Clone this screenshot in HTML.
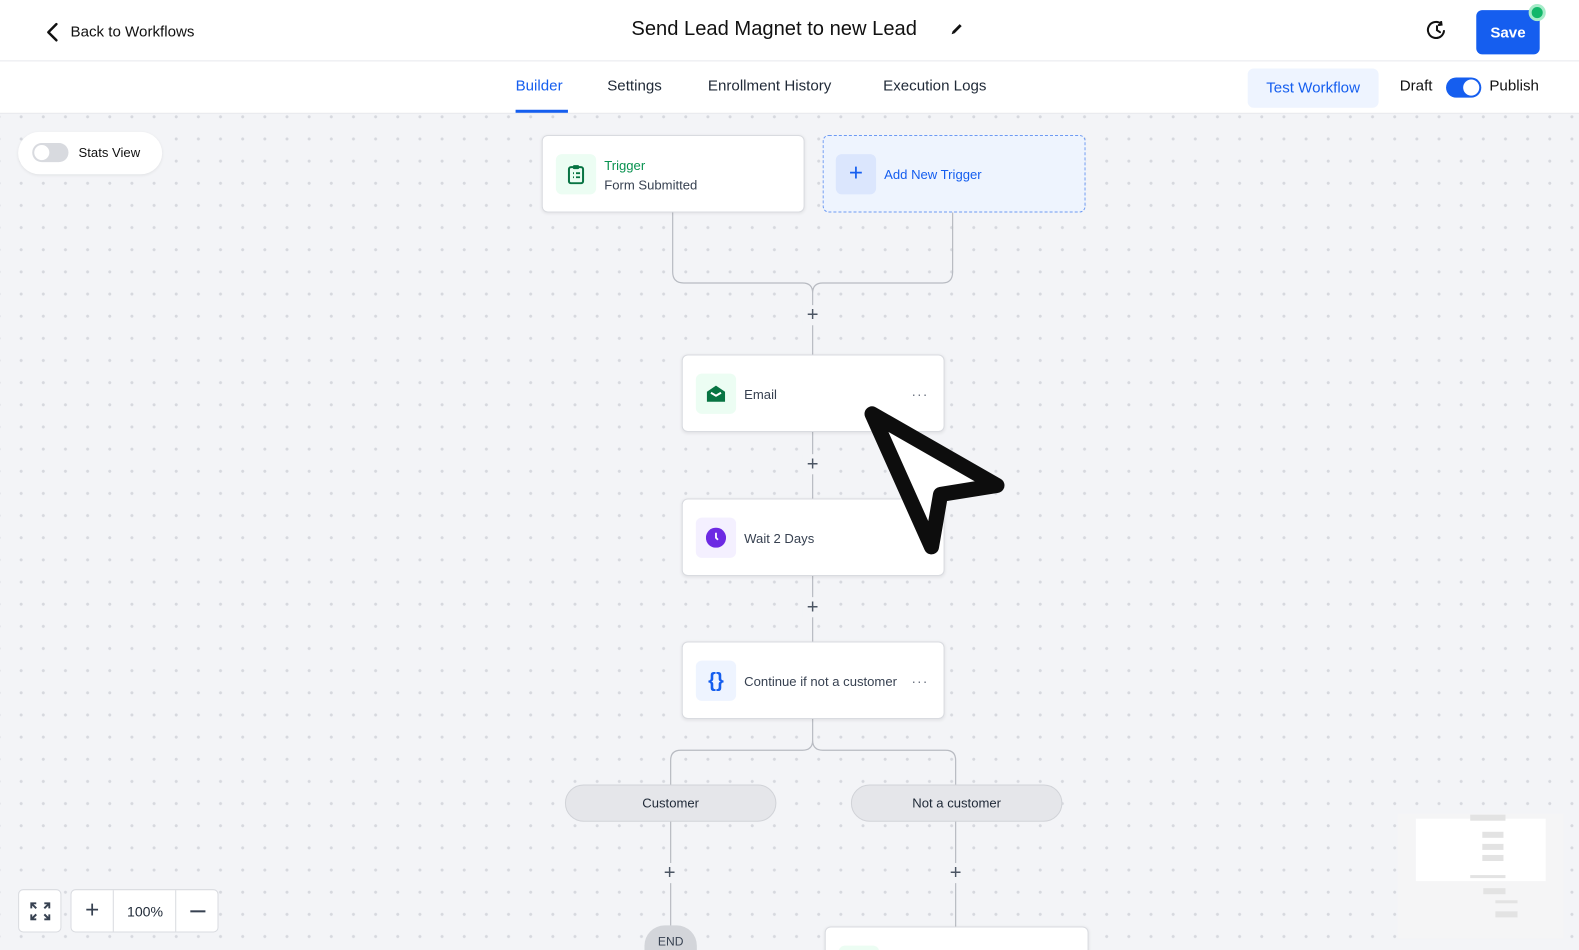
<!DOCTYPE html>
<html style="overflow:hidden;width:1579px;height:950px"><head><meta charset="utf-8"><style>
*{box-sizing:border-box;margin:0;padding:0}
html,body{overflow:hidden}
body{width:1579px;height:950px;font-family:"Liberation Sans",sans-serif;background:#f3f4f7;position:relative;color:#111827}
#w{position:absolute;left:0;top:0;width:1568px;height:944px;transform:scale(1.007);transform-origin:0 0}
.canvas{position:absolute;left:0;top:113px;width:1579px;height:837px;background-color:#f3f4f7;background-image:radial-gradient(circle,#d6d8de 1.3px,transparent 1.7px);background-size:22px 22px;background-position:10px -8px}
.hdr{position:absolute;left:0;top:0;width:1579px;height:61px;background:#fff;border-bottom:1px solid #e5e7eb}
.tabs{position:absolute;left:0;top:61px;width:1579px;height:52px;background:#fff;border-bottom:1px solid #e5e7eb}
.abs{position:absolute}
.card{position:absolute;background:#fff;border:1px solid #d9dbe0;border-radius:6px;box-shadow:0 1px 3px rgba(0,0,0,.08)}
.ic{position:absolute;left:13px;top:18px;width:40px;height:40px;border-radius:6px;display:flex;align-items:center;justify-content:center}
.lbl{position:absolute;left:61px;font-size:13px;color:#374151}
.dots{position:absolute;right:15px;top:30px;font-size:14px;color:#6b7280;letter-spacing:1px}
.plus{position:absolute;font-size:20px;color:#4b5563;width:20px;text-align:center;line-height:20px;background:#f3f4f7}
.pill{position:absolute;height:37px;background:#e5e6ea;border:1px solid #d1d3d8;border-radius:19px;font-size:13px;text-align:center;line-height:35px;color:#1f2937}
</style></head><body>
<div id="w">
<div class="canvas"></div>
<div class="hdr">
 <svg class="abs" style="left:44px;top:22px" width="16" height="20" viewBox="0 0 16 20"><path d="M12 2 L4 10 L12 18" stroke="#111" stroke-width="2.5" fill="none" stroke-linecap="round" stroke-linejoin="round"/></svg>
 <div class="abs" style="left:70px;top:23px;font-size:15px;color:#111">Back to Workflows</div>
 <div class="abs" style="left:627px;top:18px;font-size:20px;color:#111">Send Lead Magnet to new Lead</div>
 <svg class="abs" style="left:942px;top:21px" width="16" height="16" viewBox="0 0 16 16"><path d="M3 13 L4 10 L11 3 L13 5 L6 12 Z" fill="#111"/></svg>
 <svg class="abs" style="left:1416px;top:19px" width="22" height="22" viewBox="0 0 22 22"><path d="M18 11 A8 8 0 1 1 15 4.5" stroke="#111" stroke-width="2" fill="none"/><path d="M15 2 L15.5 5.5 L12 6" stroke="#111" stroke-width="2" fill="none"/><path d="M11 7 V11 L14 13" stroke="#111" stroke-width="2" fill="none" stroke-linecap="round"/></svg>
 <div class="abs" style="left:1466px;top:10px;width:63px;height:44px;background:#155eef;border-radius:6px;color:#fff;font-size:15px;font-weight:bold;text-align:center;line-height:46px">Save</div>
 <div class="abs" style="left:1518px;top:4px;width:17px;height:17px;border-radius:50%;background:#12b76a;border:3px solid #a6ecc9"></div>
</div>
<div class="tabs">
 <div class="abs" style="left:512px;top:16px;font-size:15px;color:#155eef">Builder</div>
 <div class="abs" style="left:512px;top:48px;width:52px;height:3px;background:#155eef"></div>
 <div class="abs" style="left:603px;top:16px;font-size:15px;color:#1f2937">Settings</div>
 <div class="abs" style="left:703px;top:16px;font-size:15px;color:#1f2937">Enrollment History</div>
 <div class="abs" style="left:877px;top:16px;font-size:15px;color:#1f2937">Execution Logs</div>
 <div class="abs" style="left:1239px;top:7px;width:130px;height:39px;background:#eef4ff;border-radius:6px;color:#155eef;font-size:15px;text-align:center;line-height:40px">Test Workflow</div>
 <div class="abs" style="left:1390px;top:16px;font-size:15px;color:#111">Draft</div>
 <div class="abs" style="left:1436px;top:16px;width:35px;height:20px;background:#155eef;border-radius:10px"><div class="abs" style="left:17px;top:2px;width:16px;height:16px;border-radius:50%;background:#fff"></div></div>
 <div class="abs" style="left:1479px;top:16px;font-size:15px;color:#111">Publish</div>
</div>

<div class="abs" style="left:18px;top:131px;width:143px;height:42px;background:#fff;border-radius:21px;box-shadow:0 1px 3px rgba(0,0,0,.08)">
 <div class="abs" style="left:14px;top:11px;width:36px;height:19px;background:#d8dadf;border-radius:10px"><div class="abs" style="left:2px;top:2px;width:15px;height:15px;border-radius:50%;background:#fff"></div></div>
 <div class="abs" style="left:60px;top:13px;font-size:13px;color:#111">Stats View</div>
</div>

<svg class="abs" style="left:0;top:0" width="1579" height="950">
 <g stroke="#b8bbc2" stroke-width="1.2" fill="none">
  <path d="M668 210 V270 Q668 281 679 281 H797 Q807 281 807 291 Q807 281 817 281 H936 Q946 281 946 270 V210"/>
  <path d="M807 291 V352 M807 429 V495 M807 571 V637"/>
  <path d="M807 713 V735 Q807 745 797 745 H676 Q666 745 666 755 V779 M807 735 Q807 745 817 745 H939 Q949 745 949 755 V779"/>
  <path d="M666 815 V922 M949 815 V920"/>
 </g>
</svg>
<div class="plus" style="left:797px;top:303px">+</div>
<div class="plus" style="left:797px;top:451px">+</div>
<div class="plus" style="left:797px;top:593px">+</div>
<div class="plus" style="left:655px;top:857px">+</div>
<div class="plus" style="left:939px;top:857px">+</div>

<div class="card" style="left:538px;top:134px;width:261px;height:77px">
 <div class="ic" style="background:#ecfdf3"><svg width="18" height="20" viewBox="0 0 18 20"><rect x="2" y="3" width="14" height="16" rx="2" stroke="#087443" stroke-width="2" fill="none"/><rect x="6" y="1" width="6" height="4" rx="1" fill="#087443"/><path d="M6 9h1M9 9h4M6 13h1M9 13h4" stroke="#087443" stroke-width="1.8"/></svg></div>
 <div class="lbl" style="top:22px;color:#099250;font-size:13px">Trigger</div>
 <div class="lbl" style="top:41px;color:#374151">Form Submitted</div>
</div>
<div class="abs" style="left:817px;top:134px;width:261px;height:77px;border:1px dashed #6d9af3;border-radius:6px;background:#eef4fe">
 <div class="abs" style="left:12px;top:18px;width:40px;height:40px;border-radius:6px;background:#dbe6fd;color:#155eef;font-size:24px;text-align:center;line-height:38px">+</div>
 <div class="abs" style="left:60px;top:31px;font-size:13px;color:#155eef">Add New Trigger</div>
</div>

<div class="card" style="left:677px;top:352px;width:261px;height:77px">
 <div class="ic" style="background:#ecfdf3"><svg width="20" height="18" viewBox="0 0 20 18"><path d="M1 7 L10 1 L19 7 V17 H1 Z" fill="#087443"/><path d="M5 8 L10 11 L15 8" stroke="#fff" stroke-width="2" fill="none"/></svg></div>
 <div class="lbl" style="top:31px">Email</div><div class="dots">···</div>
</div>
<div class="card" style="left:677px;top:495px;width:261px;height:77px">
 <div class="ic" style="background:#f4f0ff"><svg width="20" height="20" viewBox="0 0 20 20"><circle cx="10" cy="10" r="10" fill="#6d2ae3"/><path d="M10 5 V10 L12 12" stroke="#fff" stroke-width="1.8" fill="none"/></svg></div>
 <div class="lbl" style="top:31px">Wait 2 Days</div>
</div>
<div class="card" style="left:677px;top:637px;width:261px;height:77px">
 <div class="ic" style="background:#eef4ff;color:#155eef;font-size:20px;font-weight:bold">{}</div>
 <div class="lbl" style="top:31px">Continue if not a customer</div><div class="dots">···</div>
</div>

<div class="pill" style="left:561px;top:779px;width:210px">Customer</div>
<div class="pill" style="left:845px;top:779px;width:210px">Not a customer</div>
<div class="abs" style="left:640px;top:919px;width:52px;height:30px;border-radius:20px 20px 0 0;background:#d3d5da;font-size:12px;color:#374151;text-align:center;padding-top:9px">END</div>
<div class="card" style="left:819px;top:920px;width:262px;height:30px;border-radius:6px 6px 0 0"><div class="abs" style="left:13px;top:18px;width:40px;height:12px;background:#ecfdf3;border-radius:6px"></div></div>

<svg class="abs" style="left:0;top:0" width="1579" height="950"><path d="M866 411 L990 482 L934 491 L925 543 Z" fill="#fff" stroke="#0d0d0d" stroke-width="15" stroke-linejoin="round"/></svg>

<div class="abs" style="left:1388px;top:808px;width:165px;height:124px;background:#f5f5f6"></div>
<div class="abs" style="left:1406px;top:813px;width:129px;height:62px;background:#fff"></div>
<div class="abs" style="left:1460px;top:809px;width:35px;height:6px;background:#e3e3e3"></div>
<div class="abs" style="left:1472px;top:826px;width:21px;height:6px;background:#e3e3e3"></div>
<div class="abs" style="left:1472px;top:838px;width:21px;height:6px;background:#e3e3e3"></div>
<div class="abs" style="left:1472px;top:849px;width:21px;height:6px;background:#e3e3e3"></div>
<div class="abs" style="left:1460px;top:869px;width:35px;height:3px;background:#e3e3e3"></div>
<div class="abs" style="left:1473px;top:882px;width:22px;height:6px;background:#e3e3e3"></div>
<div class="abs" style="left:1485px;top:894px;width:22px;height:3px;background:#e3e3e3"></div>
<div class="abs" style="left:1485px;top:905px;width:22px;height:6px;background:#e3e3e3"></div>

<div class="abs" style="left:18px;top:883px;width:43px;height:43px;background:#fff;border:1px solid #d9dbe0;border-radius:5px">
 <svg class="abs" style="left:11px;top:12px" width="20" height="18" viewBox="0 0 20 18" stroke="#374151" stroke-width="2" fill="none"><path d="M1 6V1h5M1 1l5 5M19 6V1h-5M19 1l-5 5M1 12v5h5M1 17l5-5M19 12v5h-5M19 17l-5-5"/></svg>
</div>
<div class="abs" style="left:70px;top:883px;width:147px;height:43px;background:#fff;border:1px solid #d9dbe0;border-radius:5px">
 <div class="abs" style="left:0;top:0;width:42px;height:41px;border-right:1px solid #d9dbe0;font-size:24px;color:#374151;text-align:center;line-height:40px">+</div>
 <div class="abs" style="left:42px;top:13px;width:62px;text-align:center;font-size:14px;color:#1f2937">100%</div>
 <div class="abs" style="left:103px;top:0;width:43px;height:41px;border-left:1px solid #d9dbe0"><div class="abs" style="left:14px;top:20px;width:15px;height:2px;background:#374151"></div></div>
</div>
</div>
</body></html>
